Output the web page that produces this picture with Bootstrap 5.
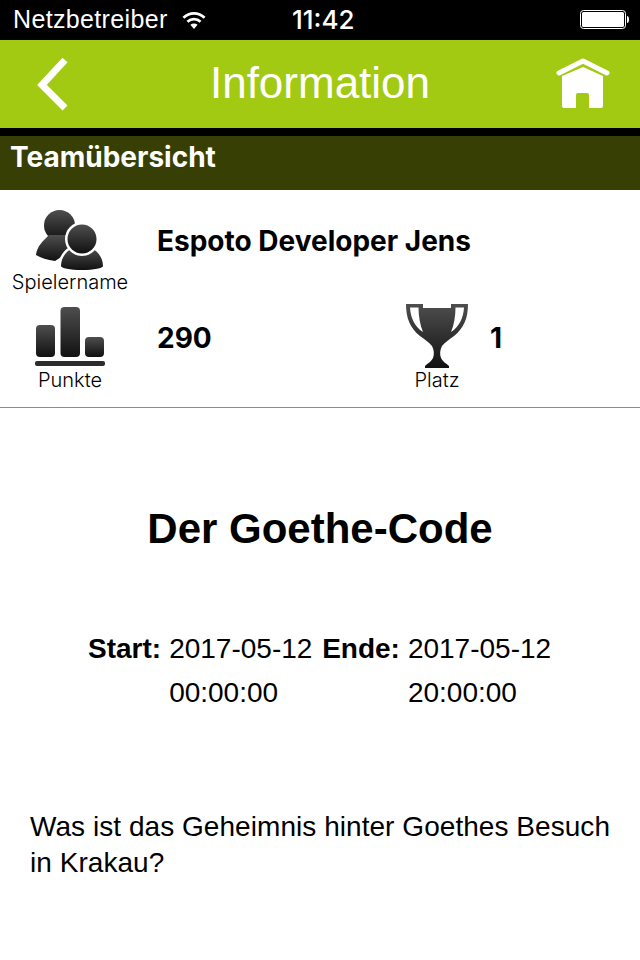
<!DOCTYPE html>
<html lang="de">
<head>
    <meta charset="UTF-8">
    <meta name="viewport" content="width=device-width, initial-scale=1.0">
    <title>Information</title>
    <link href="https://cdn.jsdelivr.net/npm/bootstrap@5.3.0/dist/css/bootstrap.min.css" rel="stylesheet">
    <style>
        body { font-family: "Liberation Sans", Arial, sans-serif; color: #000; background: #fff; }
        .status-bar { height: 40px; background: #000; color: #fff; padding: 0 10px 0 13px; font-size: 25px; letter-spacing: .35px; }
        .status-left { width: 279px; gap: 14px; }
        .status-time { font-family: Inter, sans-serif; font-size: 26px; font-weight: 500; letter-spacing: 0; line-height: 40px; }
        .app-header { height: 88px; background: #a3ca13; color: #fff; padding: 0 30px; margin-bottom: 8px; }
        .header-slot { width: 54px; }
        .back-icon { margin-left: 6px; }
        .app-title { font-size: 44px; line-height: 86px; height: 88px; }
        .section-bar { height: 54px; background: #373f05; color: #fff; font: 700 28px/42px Inter, sans-serif; padding-left: 10px; }
        .page-wrap { background: #000; }
        .team-info { height: 218px; background: #fff; border-bottom: 1px solid #8c8c8c; padding-top: 18px; }
        .icon-col { width: 140px; }
        .icon-label { font: 300 20px/24px Inter, sans-serif; }
        .team-row-top { height: 96px; }
        .team-row-bottom { height: 102px; }
        .team-value { font: 700 28px/34px Inter, sans-serif; padding-left: 17px; }
        .name-value { padding-top: 16px; }
        .score-value { padding-top: 17px; }
        .points-col { width: 247px; }
        .rank-col { width: 100px; }
        .rank-value { padding-left: 3px; }
        .bars-icon { margin-top: 3px; }
        .game-title { font-size: 42px; font-weight: 700; line-height: 46px; margin: 98px 0 75px; text-align: center; }
        .time-grid { font-size: 28px; line-height: 44px; padding-left: 88px; }
        .time-label { font-weight: 700; }
        .time-value { width: 153px; white-space: nowrap; }
        .game-text { font-size: 28px; line-height: 36px; margin: 94px 0 0; padding: 0 20px 0 30px; letter-spacing: .05px; }
    </style>
</head>
<body>
    <div class="page-wrap">
        <div class="status-bar d-flex align-items-center">
            <div class="status-left d-flex align-items-center">
                <span>Netzbetreiber</span>
                <svg width="24" height="19" viewBox="0 0 22 18">
                    <path d="M1 6.500C6.800.9 15.200.9 21 6.500" fill="none" stroke="#fff" stroke-width="2.600"/>
                    <path d="M4.800 10.200c3.600-3.200 8.800-3.200 12.400 0" fill="none" stroke="#fff" stroke-width="2.600"/>
                    <path d="M7.600 13c2-1.700 4.800-1.700 6.800 0L11 17z" fill="#fff"/>
                </svg>
            </div>
            <div class="status-time">11:42</div>
            <svg class="ms-auto" width="50" height="20" viewBox="0 0 50 20">
                <rect x=".5" y=".5" width="45" height="18" rx="3" fill="#000" stroke="#fff"/>
                <rect x="2" y="2" width="42" height="15" rx="1.500" fill="#fff"/>
                <path d="M47 6c1.500 0 2 1.500 2 3.500S48.500 13 47 13z" fill="#fff"/>
            </svg>
        </div>

        <div class="app-header d-flex justify-content-between align-items-center">
            <div class="header-slot">
                <svg class="d-block back-icon" width="34" height="54" viewBox="0 0 34 54">
                    <path d="M29 3 6 28l23 23" fill="none" stroke="#fff" stroke-width="7"/>
                </svg>
            </div>
            <div class="app-title">Information</div>
            <div class="header-slot">
                <svg class="d-block" width="54" height="52" viewBox="0 0 54 52">
                    <path d="M3 15 27 3l24 12" fill="none" stroke="#fff" stroke-width="5" stroke-linecap="round" stroke-linejoin="round"/>
                    <path d="M6 18 27 9l20 9v30a2 2 0 0 1-2 2H33V37a2 2 0 0 0-2-2h-9a2 2 0 0 0-2 2v13H8a2 2 0 0 1-2-2z" fill="#fff"/>
                </svg>
            </div>
        </div>

        <div class="section-bar">Teamübersicht</div>
    </div>

    <svg width="0" height="0" class="position-absolute">
        <defs>
            <linearGradient id="iconFill" x1="0" y1="0" x2="0" y2="1">
                <stop offset="0" stop-color="#4e4e4e"/>
                <stop offset="1" stop-color="#111"/>
            </linearGradient>
        </defs>
    </svg>

    <div class="team-info">
        <div class="team-row-top d-flex">
            <div class="icon-col text-center">
                <svg class="d-block mx-auto" width="70" height="62" viewBox="0 0 70 62">
                    <circle cx="24.500" cy="17.500" r="15.500" fill="url(#iconFill)"/>
                    <path d="M14 27C8 33 2 38 1 47c5 3 11 5 19 6l20-13-4-13z" fill="url(#iconFill)"/>
                    <g fill="url(#iconFill)" stroke="#fff" stroke-width="5" paint-order="stroke">
                        <path d="M38 40c5 5 13 5 18 0 7 3 12 10 12 18 0 2-9 4-21 4s-21-2-21-4c0-8 5-15 12-18z"/>
                        <circle cx="47" cy="31" r="14.500"/>
                    </g>
                </svg>
                <div class="icon-label">Spielername</div>
            </div>
            <div class="team-value name-value">Espoto Developer Jens</div>
        </div>
        <div class="team-row-bottom d-flex">
            <div class="icon-col text-center">
                <svg class="d-block mx-auto bars-icon" width="70" height="61" viewBox="0 0 70 61">
                    <rect x="1" y="18" width="19" height="32" rx="4" fill="url(#iconFill)"/>
                    <rect x="25.500" y="0" width="19.500" height="50" rx="4" fill="url(#iconFill)"/>
                    <rect x="50" y="30" width="19" height="20" rx="4" fill="url(#iconFill)"/>
                    <rect x="0" y="54" width="70" height="5" rx="2" fill="#2c2c2c"/>
                </svg>
                <div class="icon-label">Punkte</div>
            </div>
            <div class="team-value score-value points-col">290</div>
            <div class="rank-col text-center">
                <svg class="d-block mx-auto" width="62" height="64" viewBox="0 0 62 64">
                    <path fill-rule="evenodd" d="M0 0H17V4H45V0H62C62 14 58 24 48 32 44 35 39 38 36 42 34 46 33.500 50 35 54 37 58 40 59 43 62V64H19V62C22 59 25 58 27 54 28.500 50 28 46 26 42 23 38 18 35 14 32 4 24 0 14 0 0ZM4 3.500H12.500C12.500 12 14 21 17 28 9 23 4.500 14 4 3.500ZM58 3.500H49.500C49.500 12 48 21 45 28 53 23 57.500 14 58 3.500Z" fill="url(#iconFill)"/>
                </svg>
                <div class="icon-label">Platz</div>
            </div>
            <div class="team-value score-value rank-value">1</div>
        </div>
    </div>

    <h1 class="game-title">Der Goethe-Code</h1>

    <div class="time-grid d-flex">
        <div class="time-label me-2">Start:</div>
        <div class="time-value">2017-05-12<br>00:00:00</div>
        <div class="time-label me-2">Ende:</div>
        <div class="time-value">2017-05-12<br>20:00:00</div>
    </div>

    <p class="game-text">Was ist das Geheimnis hinter Goethes Besuch in Krakau?</p>

    <script src="https://cdn.jsdelivr.net/npm/bootstrap@5.3.0/dist/js/bootstrap.bundle.min.js"></script>
</body>
</html>
